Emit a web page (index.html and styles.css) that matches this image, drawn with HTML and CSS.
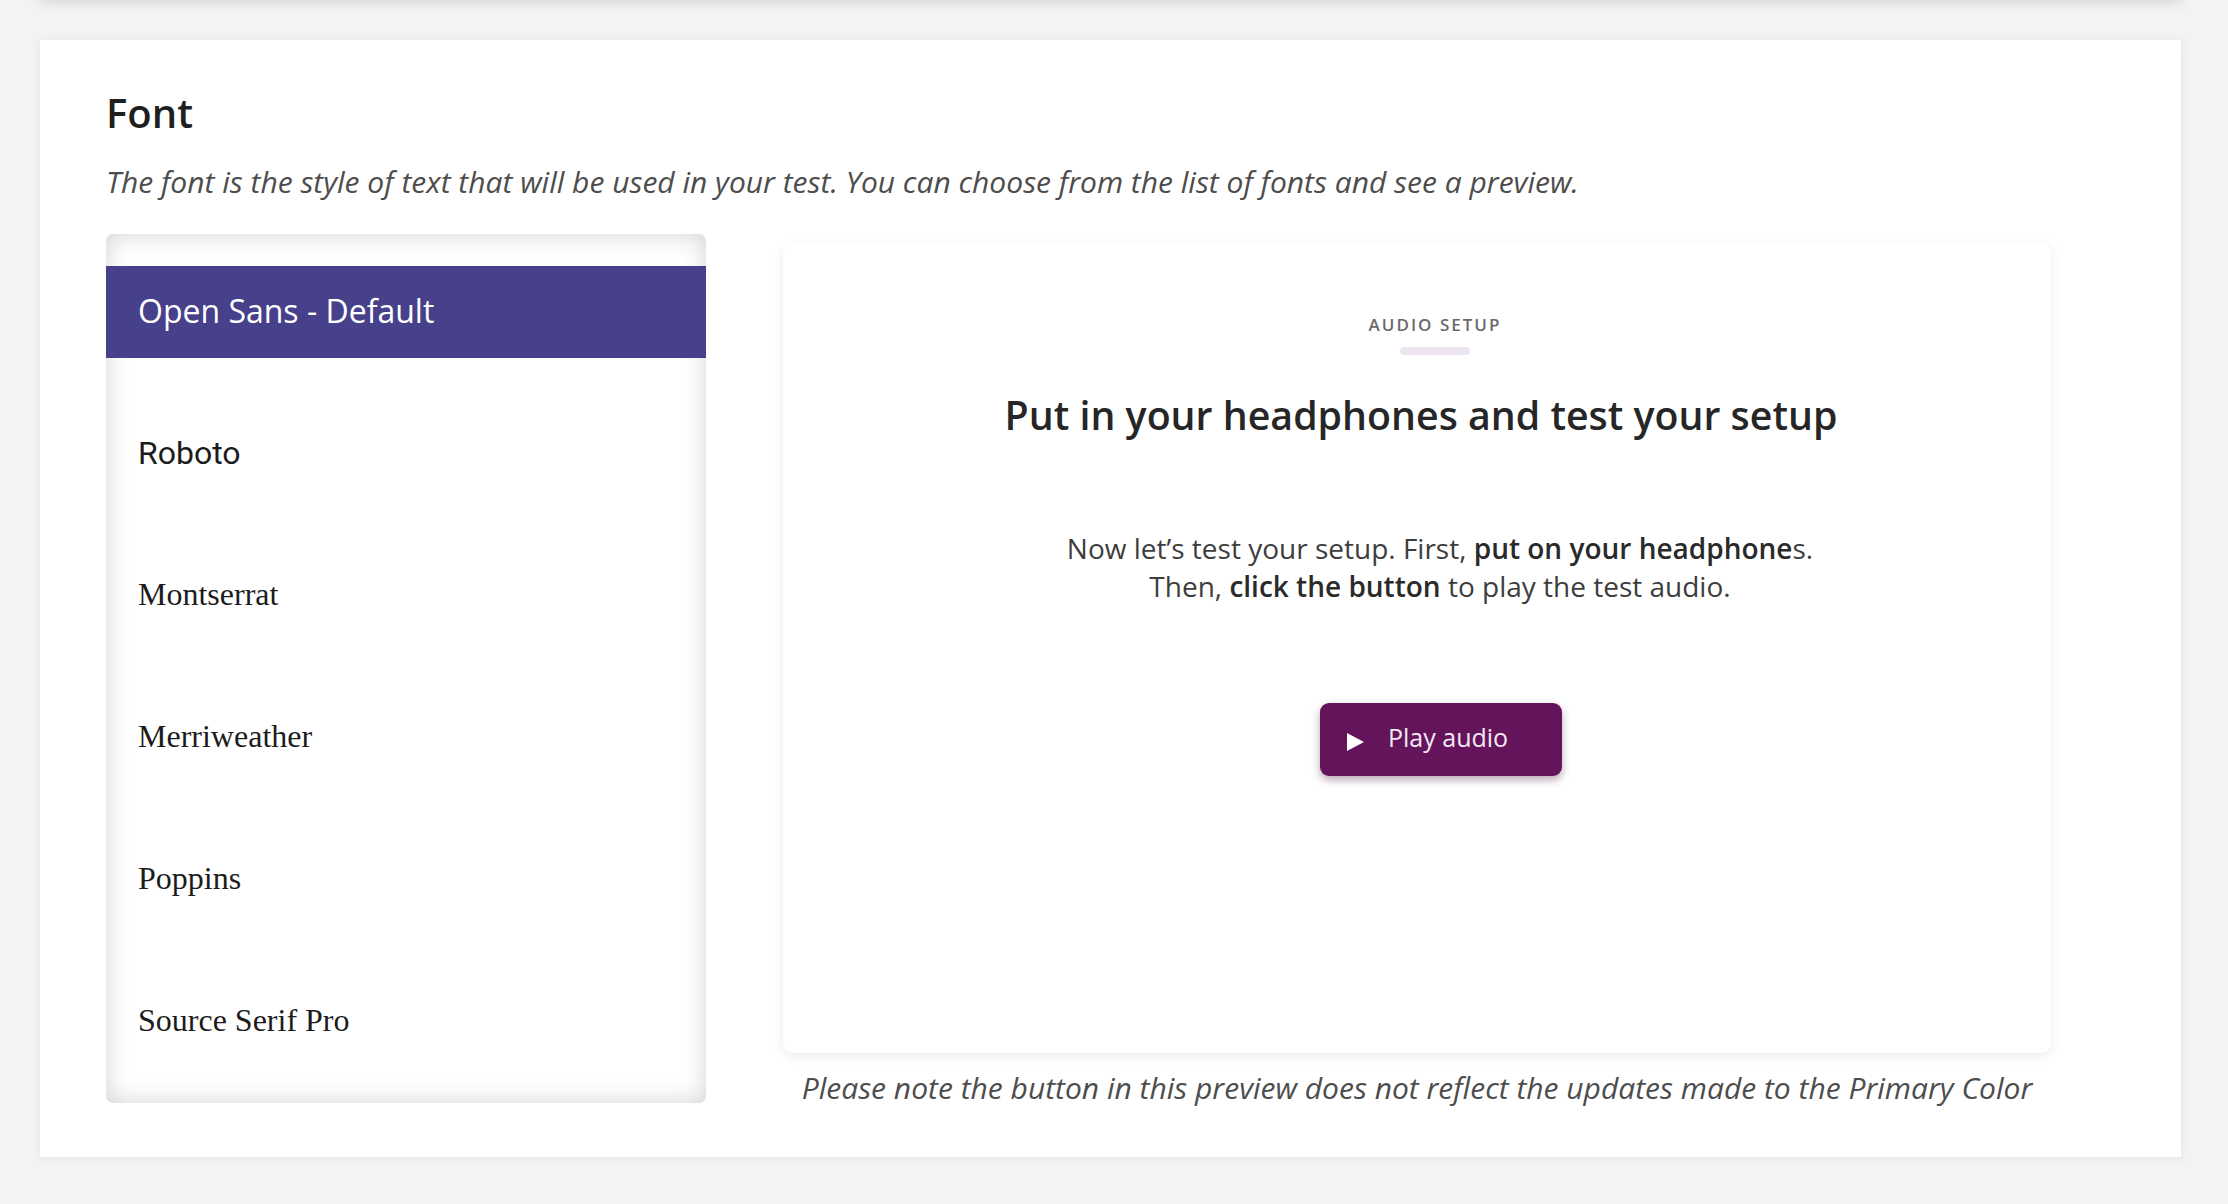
FILE: index.html
```html
<!DOCTYPE html>
<html lang="en">
<head>
<meta charset="utf-8">
<title>Font settings</title>
<link rel="stylesheet" href="styles.css">
</head>
<body>
<div class="page">
  <div class="top-card"></div>
  <section class="card">
    <h2 class="title">Font</h2>
    <p class="subtitle">The font is the style of text that will be used in your test. You can choose from the list of fonts and see a preview.</p>
    <div class="row">
      <ul class="font-list">
        <li class="font-item selected f-open">Open Sans - Default</li>
        <li class="font-item f-roboto">Roboto</li>
        <li class="font-item f-serif">Montserrat</li>
        <li class="font-item f-serif">Merriweather</li>
        <li class="font-item f-serif">Poppins</li>
        <li class="font-item f-serif">Source Serif Pro</li>
      </ul>
      <div class="preview-col">
        <div class="preview">
          <div class="eyebrow">AUDIO SETUP</div>
          <div class="eyebrow-bar"></div>
          <h3 class="preview-title">Put in your headphones and test your setup</h3>
          <p class="preview-text">Now let’s test your setup. First, <b>put on your headphone</b>s.<br>Then, <b>click the button</b> to play the test audio.</p>
          <div class="btn-row">
            <button class="play-btn" type="button">
              <svg class="play-icon" width="17" height="18" viewBox="0 0 17 18"><path d="M0 0 L17 9 L0 18 Z" fill="#ffffff"/></svg>
              <span>Play audio</span>
            </button>
          </div>
        </div>
        <p class="note">Please note the button in this preview does not reflect the updates made to the Primary Color</p>
      </div>
    </div>
  </section>
</div>
</body>
</html>
```
FILE: styles.css
```css
* { box-sizing: border-box; }
html, body {
  margin: 0;
  padding: 0;
  background: #f3f3f3;
  font-family: "Open Sans", "Liberation Sans", sans-serif;
  color: #222;
}
.page {
  padding: 0 47px 0 40px;
  overflow: hidden;
  height: 1204px;
}
.top-card {
  height: 40px;
  margin-top: -40px;
  background: #fff;
  box-shadow: 0 2px 12px rgba(0,0,0,0.13);
}
.card {
  margin-top: 40px;
  background: #fff;
  box-shadow: 0 1px 8px rgba(0,0,0,0.07);
  padding: 49px 130px 49px 66px;
}
.title {
  margin: 0;
  font-size: 40px;
  line-height: 48px;
  font-weight: 600;
  color: #1f1f1f;
}
.subtitle {
  margin: 25px 0 0;
  font-size: 30px;
  line-height: 40px;
  font-style: italic;
  color: #4d4d4d;
}
.row {
  display: flex;
  gap: 77px;
  margin-top: 32px;
  align-items: flex-start;
}
.font-list {
  list-style: none;
  margin: 0;
  padding: 32px 0 35px;
  width: 600px;
  flex: none;
  border-radius: 7px;
  background: #fff;
  box-shadow: inset 0 0 24px rgba(0,0,0,0.18);
  display: flex;
  flex-direction: column;
  gap: 50px;
}
.font-item {
  height: 92px;
  display: flex;
  align-items: center;
  padding-left: 32px;
  padding-bottom: 3px;
  font-size: 32px;
  color: #1c1c1c;
}
.font-item.selected {
  background: #46418a;
  color: #fff;
}
.f-open { font-family: "Open Sans", sans-serif; }
.f-roboto { font-family: Roboto, sans-serif; }
.f-serif { font-family: "Liberation Serif", "Times New Roman", serif; }
.preview-col {
  width: 1268px;
  flex: none;
  margin-top: 9px;
}
.preview {
  background: #fff;
  border-radius: 10px;
  box-shadow: 0 3px 12px rgba(0,0,0,0.08);
  height: 810px;
  padding-top: 70px;
  display: flex;
  flex-direction: column;
  align-items: center;
}
.eyebrow {
  font-size: 17px;
  line-height: 24px;
  font-weight: 600;
  letter-spacing: 2px;
  color: #6a6a6a;
  padding-left: 36px;
}
.eyebrow-bar {
  width: 70px;
  height: 8px;
  border-radius: 4px;
  background: #ece4ee;
  margin-top: 10px;
  margin-left: 36px;
}
.preview-title {
  margin: 34px 0 0;
  padding-left: 8px;
  font-size: 39.3px;
  line-height: 52px;
  font-weight: 600;
  color: #262626;
}
.preview-text {
  margin: 88px 0 0;
  font-size: 28px;
  line-height: 38px;
  text-align: center;
  color: #3d3d3d;
  padding-left: 46px;
}
.preview-text b {
  font-weight: 600;
  color: #2a2a2a;
}
.btn-row {
  margin-top: 98px;
  padding-left: 48px;
}
.play-btn {
  width: 242px;
  height: 73px;
  border: 0;
  border-radius: 9px;
  background: #64145b;
  box-shadow: 0 4px 8px rgba(60,0,50,0.35);
  display: flex;
  align-items: center;
  padding: 0 0 5px 27px;
  gap: 24px;
  font-family: "Open Sans", sans-serif;
  font-size: 25px;
  color: #f3e9f2;
}
.play-icon {
  flex: none;
  margin-top: 10px;
}
.note {
  margin: 15px 0 0;
  font-size: 30px;
  line-height: 40px;
  font-style: italic;
  text-align: center;
  color: #4d4d4d;
}
```
